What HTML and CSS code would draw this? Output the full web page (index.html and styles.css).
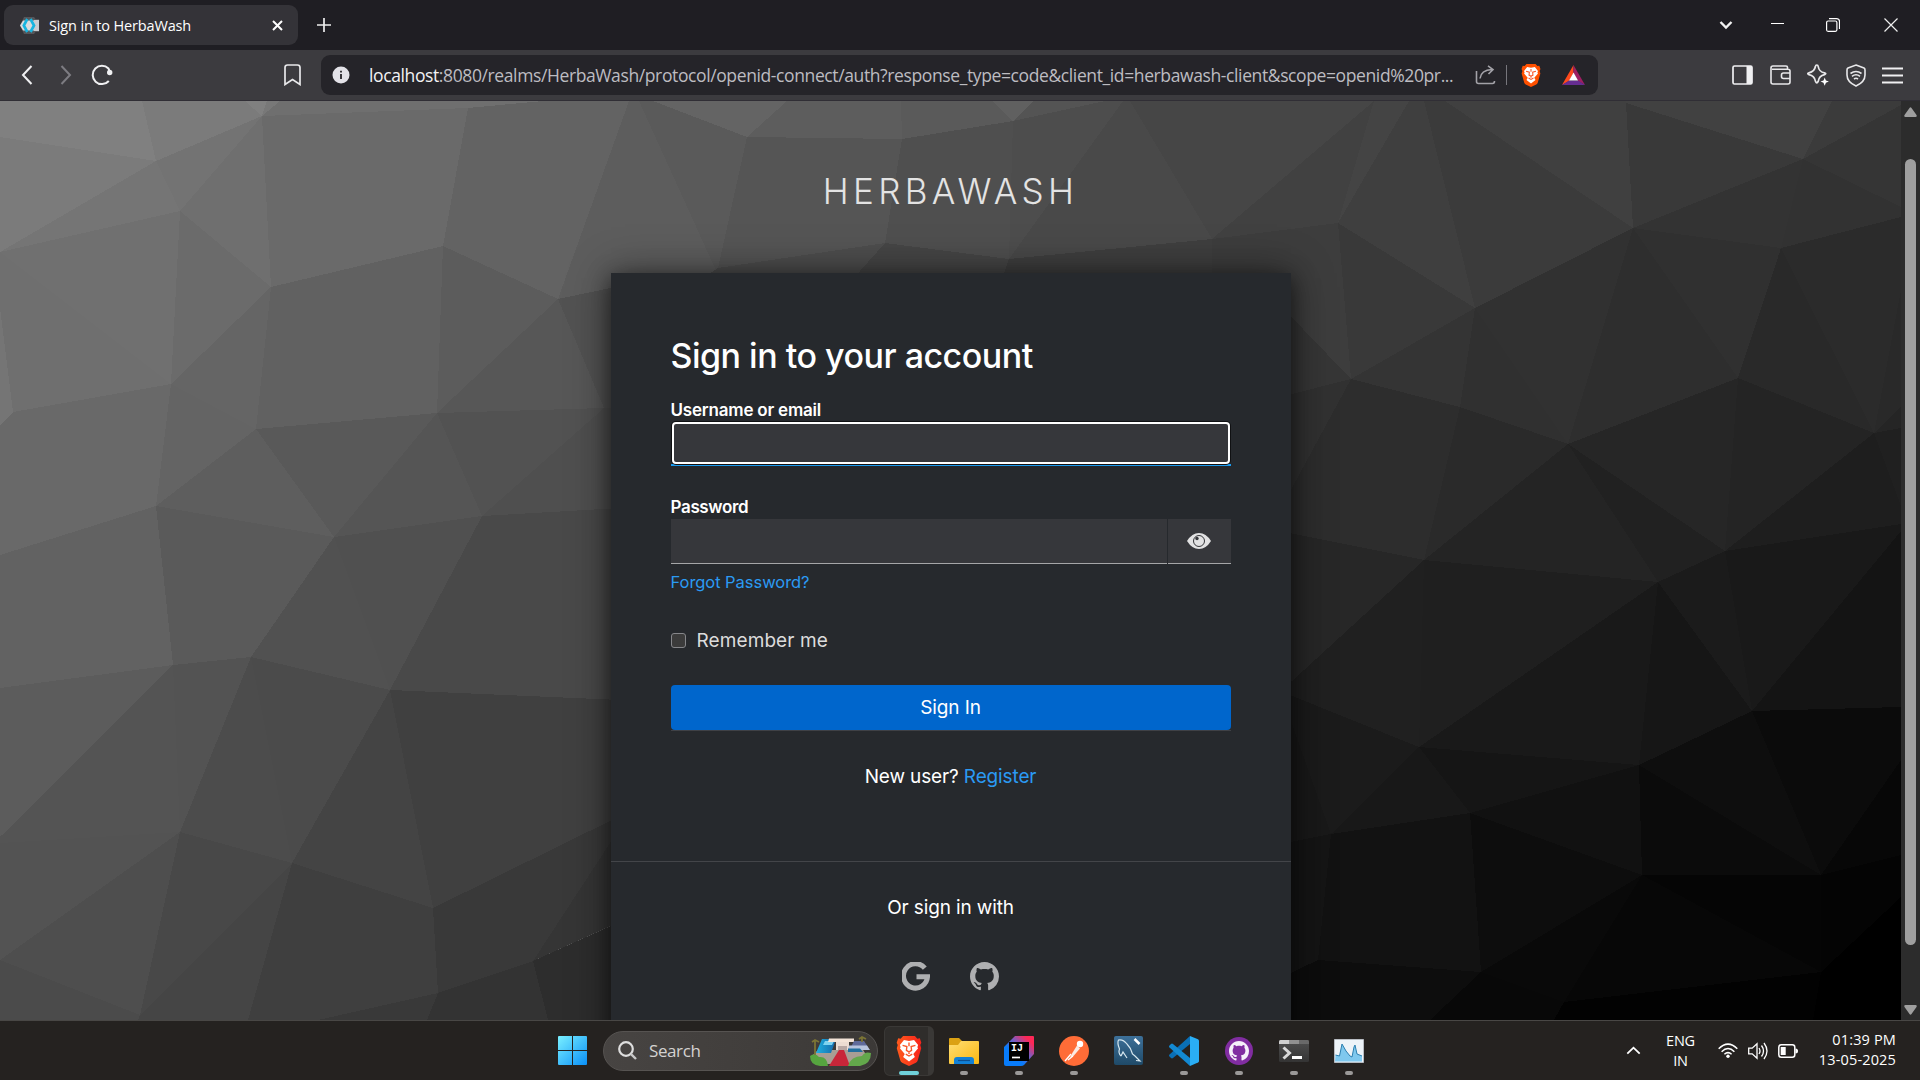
FILE: index.html
```html
<!DOCTYPE html>
<html lang="en">
<head>
<meta charset="utf-8">
<title>Sign in to HerbaWash</title>
<link rel="stylesheet" href="styles.css">
</head>
<body>
<svg width="0" height="0" class="defs">
  <defs>
    <linearGradient id="gWin" x1="0" y1="0" x2="1" y2="1"><stop offset="0" stop-color="#7af0ff"/><stop offset="1" stop-color="#0a90f8"/></linearGradient>
    <linearGradient id="gBrave" x1="0" y1="0" x2="1" y2="0"><stop offset="0" stop-color="#ff5a1c"/><stop offset="1" stop-color="#f8231c"/></linearGradient>
    <linearGradient id="gFolder" x1="0" y1="0" x2="1" y2="1"><stop offset="0" stop-color="#ffde74"/><stop offset="1" stop-color="#f9b710"/></linearGradient>
    <linearGradient id="gIj" x1="0" y1="1" x2="1" y2="0"><stop offset=".35" stop-color="#087cfa"/><stop offset=".6" stop-color="#7b5bc0"/><stop offset=".85" stop-color="#fe2857"/></linearGradient>
    <linearGradient id="gSql" x1="0" y1="0" x2="0" y2="1"><stop offset="0" stop-color="#3d7099"/><stop offset="1" stop-color="#1f4a68"/></linearGradient>
    <linearGradient id="gTerm" x1="0" y1="0" x2="0" y2="1"><stop offset="0" stop-color="#505050"/><stop offset="1" stop-color="#343434"/></linearGradient>
    <linearGradient id="gPool" x1="0" y1="0" x2="1" y2="0"><stop offset="0" stop-color="#20b0e0"/><stop offset="1" stop-color="#1667a8"/></linearGradient>
    <symbol id="lion" viewBox="0 0 24 28">
      <path d="M6.500 0h11l2.300 2.500 2.300-.3 1.400 4-1 2.300.9 3-3.200 11.200q-.5 1.500-1.800 2.300L12 28l-6.400-3q-1.300-.8-1.800-2.300L.6 11.500l.9-3-1-2.300 1.400-4 2.300.3z"/>
      <path fill="#fff" d="M12 4.600l4.700-.9 3.800 4.700-.7 2.100.7 1-4.500 5.200 1.500 2.800L12 23.700l-5.500-4.200L8 16.700l-4.500-5.200.7-1-.7-2.100 3.800-4.700z"/>
      <path class="lion-face" d="M6 8.800l4 1.100-.4 3.600 2.400 1.300 2.400-1.300-.4-3.600 4-1.100M12 6v3.500M9 17l3 1.700 3-1.700M12 14.800v2" fill="none" stroke-width="1.300"/>
    </symbol>
    <symbol id="octocat" viewBox="0 0 16 16">
      <path d="M8 0C3.580 0 0 3.580 0 8c0 3.540 2.290 6.530 5.470 7.590.4.070.55-.17.550-.38 0-.19-.01-.82-.01-1.490-2.010.37-2.530-.49-2.690-.94-.09-.23-.48-.94-.82-1.130-.28-.15-.68-.52-.01-.53.630-.01 1.080.58 1.230.82.720 1.210 1.870.87 2.330.66.070-.52.280-.87.510-1.070-1.780-.2-3.640-.89-3.640-3.950 0-.87.310-1.590.82-2.150-.08-.2-.36-1.020.08-2.120 0 0 .67-.21 2.200.82.640-.18 1.320-.27 2-.27s1.360.09 2 .27c1.530-1.040 2.200-.82 2.200-.82.440 1.100.16 1.920.08 2.120.51.560.82 1.270.82 2.150 0 3.070-1.870 3.750-3.650 3.950.29.250.54.730.54 1.480 0 1.070-.01 1.930-.01 2.200 0 .21.150.46.550.38A8.010 8.010 0 0 0 16 8c0-4.420-3.580-8-8-8z"/>
    </symbol>
  </defs>
</svg>

<header class="titlebar">
  <div class="tab">
    <svg class="favicon" width="21" height="19" viewBox="0 0 21 19"><path d="M5 1h10l1.500 2H20v13h-3.500L15 18H5L1 9.500z" fill="#55565a"/><path d="M15 4h5v11h-5z" fill="#c9cbd0"/><path d="M4 4.500h11v10H4L1 9.500z" fill="#dadcdf"/><path d="M8.300 3L4.800 9.500 8.300 16M11.500 3L15 9.500 11.500 16" fill="none" stroke="#18b4e0" stroke-width="2.700"/></svg>
    <span class="tab-title">Sign in to HerbaWash</span>
    <svg class="tab-close" width="11" height="11" viewBox="0 0 11 11"><path d="M1 1l9 9M10 1l-9 9" stroke="#fff" stroke-width="2"/></svg>
  </div>
  <svg class="new-tab" width="14" height="14" viewBox="0 0 14 14"><path d="M7 0v14M0 7h14" stroke="#eee" stroke-width="1.700"/></svg>
  <div class="window-buttons">
    <svg width="14" height="10" viewBox="0 0 14 10"><path d="M1.500 2L7 7.500 12.500 2" fill="none" stroke="#f2f2f2" stroke-width="2.400"/></svg>
    <svg class="win-min" width="13" height="14" viewBox="0 0 13 14"><path d="M0 5.500h13" stroke="#fff" stroke-width="1"/></svg>
    <svg class="win-max" width="14" height="14" viewBox="0 0 14 14"><path d="M.6 4.500q0-1.500 1.500-1.500h7.300q1.500 0 1.500 1.500v7.300q0 1.500-1.500 1.500H2.100q-1.500 0-1.500-1.500zM3 .6h7.500q3 0 3 3V11" fill="none" stroke="#fff" stroke-width="1.200"/></svg>
    <svg class="win-close" width="14" height="14" viewBox="0 0 14 14"><path d="M.5.5l13 13M13.500.5l-13 13" stroke="#eee" stroke-width="1.200"/></svg>
  </div>
</header>

<nav class="toolbar">
  <svg class="back" width="12" height="20" viewBox="0 0 12 20"><path d="M10.500 1L2 10l8.500 9" fill="none" stroke="#f0f0f2" stroke-width="2"/></svg>
  <svg class="forward" width="12" height="20" viewBox="0 0 12 20"><path d="M1.500 1L10 10l-8.500 9" fill="none" stroke="#7d7c82" stroke-width="2"/></svg>
  <svg class="reload" width="22" height="22" viewBox="0 0 22 22"><path d="M17.800 17A9.200 9.200 0 1 1 17.500 4.500L19 8" fill="none" stroke="#f0f0f2" stroke-width="2"/><circle cx="18.700" cy="8.500" r="2.700" fill="#f0f0f2"/></svg>
  <svg class="bookmark" width="17" height="22" viewBox="0 0 17 22"><path d="M1 3.500Q1 1 3.500 1h10Q16 1 16 3.500V20.500l-7.500-5-7.500 5z" fill="none" stroke="#e8e8ea" stroke-width="1.700"/></svg>
  <div class="address">
    <svg class="info" width="18" height="18" viewBox="0 0 18 18"><circle cx="9" cy="9" r="8.500" fill="#e3e2e8"/><path d="M9 8v5M9 4.700v1.800" stroke="#252429" stroke-width="1.800"/></svg>
    <span class="url"><b>localhost</b>:8080/realms/HerbaWash/protocol/openid-connect/auth?response_type=code&amp;client_id=herbawash-client&amp;scope=openid%20pr...</span>
    <svg class="share" width="21" height="20" viewBox="0 0 21 20"><path d="M1.500 6v10.500q0 2 2 2h14q2 0 2-2.500M5 13.500Q6 5 17 4.500M13 .8l5 3.700-4.500 4.500" fill="none" stroke="#a3a2a8" stroke-width="1.600"/></svg>
    <i class="sep"></i>
    <svg class="lion-small" width="20" height="23"><use href="#lion" width="20" height="23" fill="#ff5000"/></svg>
    <svg class="bat" width="23" height="20" viewBox="0 0 23 20"><path d="M11.500 0L0 20l7-4 4.500-8z" fill="#ff4a1c"/><path d="M11.500 0L23 20l-7-4-4.500-8z" fill="#9e1f63"/><path d="M0 20h23l-7-4.500H7z" fill="#662d91"/><path d="M11.500 7.500L16 15.500H7z" fill="#fff"/></svg>
  </div>
  <div class="actions">
    <svg width="21" height="20" viewBox="0 0 21 20"><rect x="1" y="1" width="19" height="18" rx="1.500" fill="none" stroke="#f0f0f2" stroke-width="1.700"/><path d="M14.500 1H20v18h-5.500z" fill="#f0f0f2"/></svg>
    <svg width="21" height="20" viewBox="0 0 21 20"><path d="M17.500 4V2.200Q17.500 1 16 1H3Q1 1 1 3v14q0 2 2 2h15q2 0 2-2V6q0-1.800-2-1.800H2M20 8h-6.500q-2 0-2 2v1.500q0 2 2 2H20z" fill="none" stroke="#e8e8ea" stroke-width="1.600"/></svg>
    <svg width="22" height="22" viewBox="0 0 22 22"><path d="M9.800 1Q11 1 11.200 2.500 12 7.800 17.500 8.800q2.500.7 0 1.800-5.500 1.300-6.300 6.700-1.400 3-2.700 0-1-5.500-6.500-6.700-2.500-1 0-1.800Q7.500 7.600 8.400 2.500 8.600 1 9.800 1z" fill="none" stroke="#e8e8ea" stroke-width="1.700"/><path d="M17.700 13.500l1.200 3 3 1.100-3 1.200-1.200 3-1.200-3-3-1.200 3-1.100z" fill="#fff"/></svg>
    <svg width="20" height="23" viewBox="0 0 20 23"><path d="M10 1l8 3q1 .5 1 2v5q0 7-9 11-9-4-9-11V6q0-1.500 1-2z" fill="none" stroke="#e8e8ea" stroke-width="1.600"/><path d="M4.500 9.500q5.500-4 11 0M6 12.300q4-3 8 0M8 15q2-1.500 4 0" fill="none" stroke="#e8e8ea" stroke-width="1.600"/></svg>
    <svg width="21" height="17" viewBox="0 0 21 17"><path d="M0 1.500h21M0 8.500h21M0 15.500h21" stroke="#f0f0f2" stroke-width="1.800"/></svg>
  </div>
</nav>

<div class="viewport">
  <main class="page">
    <svg class="facets" viewBox="0 101 1901 919" preserveAspectRatio="none">
      <g>
        <path fill="#808080" d="M0 101H142L156 161 0 137z"/><path fill="#7b7b7b" d="M142 101H245L262 116 156 161z"/><path fill="#808080" d="M245 101h22l-5 15z"/><path fill="#787878" d="M267 101h13l-18 15z"/><path fill="#6f6f6f" d="M280 101H543L468 108 262 116z"/>
        <path fill="#7b7b7b" d="M0 137L156 161 0 252z"/><path fill="#757575" d="M0 252L156 161 180 211z"/><path fill="#737373" d="M156 161L262 116 180 211z"/><path fill="#6f6f6f" d="M262 116L271 287 180 211z"/><path fill="#6a6a6a" d="M262 116L468 108 443 246 271 287z"/><path fill="#636363" d="M468 108L543 101H629L558 299 443 246z"/>
        <path fill="#707070" d="M0 252L180 211 171 384z"/><path fill="#6f6f6f" d="M0 252L171 384 13 412 0 310z"/><path fill="#757575" d="M0 308L13 412 0 425z"/><path fill="#6b6b6b" d="M180 211L271 287 171 384z"/><path fill="#616161" d="M271 287L443 246 437 413 256 429z"/><path fill="#5c5c5c" d="M443 246L558 299 437 413z"/>
        <path fill="#656565" d="M171 384L271 287 256 429z"/><path fill="#696969" d="M13 412L171 384 156 506 0 555V425z"/><path fill="#646464" d="M171 384L256 429 156 506z"/><path fill="#575757" d="M558 299L604 408 437 413z"/><path fill="#525252" d="M558 299L620 286V408H604z"/>
        <path fill="#5e5e5e" d="M256 429L334 537 156 506z"/><path fill="#595959" d="M256 429L437 413 334 537z"/><path fill="#555" d="M437 413L482 516 334 537z"/><path fill="#525252" d="M437 413L604 408 482 516z"/><path fill="#4f4f4f" d="M604 408H620V509H604L482 516z"/>
        <path fill="#626262" d="M0 555L156 506 173 665 0 688z"/><path fill="#5a5a5a" d="M156 506L334 537 251 657 173 665z"/><path fill="#515151" d="M334 537L390 690 251 657z"/><path fill="#505050" d="M334 537L482 516 390 690z"/><path fill="#494949" d="M482 516L620 508V700L390 690z"/>
        <path fill="#5c5c5c" d="M0 688L173 665 0 837z"/><path fill="#545454" d="M0 837L173 665 180 832 0 843z"/><path fill="#535353" d="M173 665L251 657 180 832z"/><path fill="#4c4c4c" d="M251 657L292 863 180 832z"/><path fill="#4b4b4b" d="M251 657L390 690 292 863z"/><path fill="#444" d="M390 690L433 908 292 863z"/><path fill="#404040" d="M390 690L620 700V816L433 908z"/>
        <path fill="#535353" d="M0 843L180 832 0 960z"/><path fill="#4e4e4e" d="M0 960L180 832 140 1015z"/><path fill="#484848" d="M180 832L292 863 140 1015z"/><path fill="#454545" d="M140 1015L292 863 248 1020H138z"/><path fill="#3f3f3f" d="M292 863L433 908 438 993 318 1020H248z"/><path fill="#393939" d="M433 908L620 816V847L533 961 438 993z"/><path fill="#353535" d="M533 961L612 840V925z"/><path fill="#4b4b4b" d="M0 960L140 1015 138 1020H0z"/><path fill="#393939" d="M438 993L427 1020H318z"/><path fill="#333" d="M438 993L533 961 548 1020H427z"/><path fill="#2d2d2d" d="M533 961L620 922V1020H548z"/>
      </g>
      <g>
        <path fill="#5d5d5d" d="M629 101H639L718 275 620 286 558 299z"/><path fill="#5a5a5a" d="M639 101H653L747 137 718 275z"/><path fill="#646464" d="M653 101H787L747 137z"/><path fill="#5d5d5d" d="M787 101H901L902 139 747 137z"/><path fill="#5a5a5a" d="M901 101H992L1013 121 902 139z"/><path fill="#606060" d="M992 101h41l-20 20z"/><path fill="#545454" d="M1033 101H1105L1013 121z"/>
        <path fill="#555" d="M747 137L902 139 885 243 718 268z"/><path fill="#4f4f4f" d="M902 139L1013 121 1009 259 885 243z"/><path fill="#4d4d4d" d="M1013 121L1105 101H1123L1009 259z"/><path fill="#494949" d="M1123 101H1130L1212 239 1009 259z"/><path fill="#464646" d="M1130 101H1374L1212 239z"/>
        <path fill="#4e4e4e" d="M718 268L885 243 852 280H700z"/><path fill="#464646" d="M885 243L1009 259 1002 280H852z"/><path fill="#3f3f3f" d="M1009 259L1212 239V280H1002z"/>
      </g>
      <g>
        <path fill="#414141" d="M1374 101L1338 223 1212 239z"/><path fill="#444" d="M1374 101H1409L1338 223z"/><path fill="#3d3d3d" d="M1212 239L1338 223 1351 379 1280 305 1212 290z"/><path fill="#3f3f3f" d="M1409 101H1424L1475 308 1338 223z"/><path fill="#3b3b3b" d="M1424 101H1445L1633 228 1475 308z"/><path fill="#404040" d="M1445 101H1626L1633 228z"/><path fill="#414141" d="M1626 101H1832L1803 159 1626 103z"/><path fill="#393939" d="M1626 103L1803 159 1633 228z"/><path fill="#3b3b3b" d="M1832 101H1901V105L1803 159z"/><path fill="#353535" d="M1901 105V207L1803 159z"/>
        <path fill="#333" d="M1633 228L1803 159 1781 248z"/><path fill="#323232" d="M1803 159L1901 207V217L1781 248z"/><path fill="#393939" d="M1338 223L1475 308 1351 379z"/><path fill="#343434" d="M1475 308L1460 407 1351 379z"/><path fill="#303030" d="M1475 308L1568 444 1460 407z"/><path fill="#313131" d="M1475 308L1633 228 1568 444z"/><path fill="#2e2e2e" d="M1633 228L1738 378 1568 444z"/><path fill="#303030" d="M1633 228L1781 248 1738 378z"/><path fill="#292929" d="M1781 248L1874 433 1738 378z"/><path fill="#2b2b2b" d="M1781 248L1901 217V290L1874 433z"/><path fill="#292929" d="M1901 290V407L1874 433z"/>
        <path fill="#363636" d="M1280 305L1351 379 1280 397z"/><path fill="#313131" d="M1280 397L1351 379 1291 491 1280 510z"/><path fill="#2d2d2d" d="M1351 379L1460 407 1424 560 1280 531V510z"/><path fill="#2a2a2a" d="M1460 407L1568 444 1424 560z"/><path fill="#242424" d="M1568 444L1658 582 1424 560z"/><path fill="#212121" d="M1568 444L1725 551 1658 582z"/><path fill="#262626" d="M1568 444L1738 378 1725 551z"/><path fill="#242424" d="M1738 378L1874 433 1725 551z"/><path fill="#1e1e1e" d="M1874 433L1901 506V524L1725 551z"/><path fill="#202020" d="M1874 433L1901 428V506z"/><path fill="#252525" d="M1874 433L1901 407V428z"/>
        <path fill="#272727" d="M1280 531L1424 560 1280 692z"/><path fill="#202020" d="M1280 692L1424 560 1419 747 1280 691z"/><path fill="#1f1f1f" d="M1424 560L1658 582 1419 747z"/><path fill="#191919" d="M1658 582L1639 765 1419 747z"/><path fill="#161616" d="M1658 582L1752 711 1639 765z"/><path fill="#1b1b1b" d="M1658 582L1725 551 1752 711z"/><path fill="#191919" d="M1725 551L1901 524V531L1752 711z"/><path fill="#141414" d="M1901 531V707L1752 711z"/>
        <path fill="#1b1b1b" d="M1280 691L1419 747 1331 834 1280 690z"/><path fill="#191919" d="M1280 690L1331 834 1280 844z"/><path fill="#181818" d="M1419 747L1470 813 1331 834z"/><path fill="#151515" d="M1419 747L1639 765 1470 813z"/><path fill="#111" d="M1639 765L1642 875 1470 813z"/><path fill="#0b0b0b" d="M1639 765L1821 875H1642z"/><path fill="#0e0e0e" d="M1639 765L1752 711 1821 875z"/><path fill="#0b0b0b" d="M1752 711L1901 707V760L1821 875z"/><path fill="#070707" d="M1901 760V855L1821 875z"/>
        <path fill="#151515" d="M1280 844L1331 834 1318 960 1280 978z"/><path fill="#121212" d="M1331 834L1470 813 1481 972 1318 960z"/><path fill="#0d0d0d" d="M1470 813L1642 875 1481 972z"/><path fill="#090909" d="M1642 875L1564 1002 1481 972z"/><path fill="#070707" d="M1642 875L1821 972 1564 1002z"/><path fill="#050505" d="M1642 875H1821V972z"/><path fill="#040404" d="M1821 875L1901 855V897L1821 972z"/><path fill="#000" d="M1901 897V1020H1813L1821 972z"/>
        <path fill="#0d0d0d" d="M1280 978L1318 960 1481 972 1430 1020H1280z"/><path fill="#080808" d="M1481 972L1564 1002 1554 1020H1430z"/><path fill="#020202" d="M1564 1002L1821 972 1813 1020H1554z"/>
      </g>
    </svg>
    <div class="login">
      <h2 class="realm">HERBAWASH</h2>
      <section class="card">
        <form class="form">
          <h1>Sign in to your account</h1>
          <label class="label user-label">Username or email</label>
          <div class="user-field"><div class="input focused"></div></div>
          <label class="label pass-label">Password</label>
          <div class="password"><div class="input"></div><div class="eye"><svg width="24" height="16" viewBox="0 0 24 16"><path d="M0 8Q5 0 12 0t12 8q-5 8-12 8T0 8z" fill="#e2e2e3"/><circle cx="12" cy="8" r="5.500" fill="none" stroke="#36373b" stroke-width="1"/><circle cx="10" cy="5.500" r="1.700" fill="#36373b"/></svg></div></div>
          <a class="forgot">Forgot Password?</a>
          <div class="remember"><i class="checkbox"></i><span>Remember me</span></div>
          <div class="button-wrap"><div class="button"><span>Sign In</span></div></div>
          <p class="register"><span>New user? <a>Register</a></span></p>
        </form>
        <div class="social">
          <p><span>Or sign in with</span></p>
          <div class="providers">
            <svg width="28" height="29" viewBox="0 0 28 29"><path d="M22.800 6.100A12 12.200 0 1 0 25.500 14.800H14.500" fill="none" stroke="#aeafb1" stroke-width="5"/></svg>
            <svg width="29" height="29"><use href="#octocat" width="29" height="29" fill="#aeafb1"/></svg>
          </div>
        </div>
      </section>
    </div>
  </main>
  <aside class="scrollbar">
    <svg width="13" height="10" viewBox="0 0 13 10"><path d="M5.500 1q1-1.500 2 0l5 7q.8 2-1 2h-10q-1.800 0-1-2z" fill="#9f9f9f"/></svg>
    <i class="thumb"></i>
    <svg class="down" width="13" height="10" viewBox="0 0 13 10"><path d="M5.500 9q1 1.500 2 0l5-7q.8-2-1-2h-10Q-.3 0 .5 2z" fill="#9f9f9f"/></svg>
  </aside>
</div>

<footer class="taskbar">
  <svg class="start" width="29" height="29" viewBox="0 0 29 29"><path d="M1 0h13v14H0V1q0-1 1-1zM15 0h13q1 0 1 1v13H15zM0 15h14v14H1q-1 0-1-1zM15 15h14v13q0 1-1 1H15z" fill="url(#gWin)"/></svg>
  <div class="search">
    <svg width="19" height="19" viewBox="0 0 19 19"><circle cx="8" cy="8" r="6.800" fill="none" stroke="#dedede" stroke-width="2.200"/><path d="M12.800 12.800L18 18" stroke="#c8c8c8" stroke-width="2.400"/></svg>
    <span>Search</span>
    <svg class="art" width="61" height="31" viewBox="0 0 61 31">
      <path d="M3 20L8 15h45l6 9-12 5H12z" fill="#a89e94"/>
      <path d="M12 4h14l-5 14H6z" fill="url(#gPool)"/><path d="M15 6h9l-2 4h-9z" fill="#7fd4f0"/>
      <path d="M19 3.500h25V7H18z" fill="#f3e3d7"/><path d="M26 7h13v8H26z" fill="#ecdcd2"/><path d="M28 11h9v4h-9z" fill="#b9a8a4"/>
      <path d="M44 6h10l4 6H41z" fill="#5f6a9a"/><path d="M39 10.500h18l3 4.500H38z" fill="#b7c3dd"/><path d="M38 13.500h12l3 3.500H38z" fill="#226f9e"/>
      <path d="M29 15h5l6 16H19z" fill="#c82639"/><path d="M0 21q5-4 9 1 8-1 9 9H10Q0 30 0 21z" fill="#56a43f"/><path d="M61 18q-6-2-9 3-11 0-14 10h12q11-2 11-13z" fill="#63a84b"/>
      <path d="M5 20V5M2 7l3-2 4 2M52 7V2M49 4l3-2 4 2" fill="none" stroke="#7b7435" stroke-width="1.800"/>
    </svg>
  </div>
  <div class="apps">
    <div class="app active"><svg class="brave" width="26" height="30"><use href="#lion" width="26" height="30" fill="url(#gBrave)"/></svg></div>
    <div class="app"><svg width="30" height="30" viewBox="0 0 30 30"><path d="M0 3q0-1 1-1h9l3 3v5H0z" fill="#dba113"/><path d="M0 9h9l3-4h17q1 0 1 1v21q0 1-1 1H1q-1 0-1-1z" fill="url(#gFolder)"/><path d="M5 28v-4q0-3 3-3h14q3 0 3 3v4z" fill="#1180d6"/><path d="M9 24.500h12" stroke="#0c4f91" stroke-width="1.200"/></svg></div>
    <div class="app"><svg width="30" height="30" viewBox="0 0 30 30"><path d="M0 11L11 0h18q1 0 1 1v17L20 29q-1 1-3 1H2q-2 0-2-2z" fill="url(#gIj)"/><path d="M5 6h20v19H5z" fill="#000"/><path d="M8 21.500h8" stroke="#fff" stroke-width="1.700"/><text x="7" y="14.500" class="ij">IJ</text></svg></div>
    <div class="app"><svg width="30" height="30" viewBox="0 0 30 30"><circle cx="15" cy="15" r="15" fill="#ff6c37"/><circle cx="21" cy="8" r="3.200" fill="#fff"/><path d="M18 9.500l3 3-6.500 7.500-3.500 1.500 2-4z" fill="#fbe9e2"/><path d="M12 18l-6 7M14 20l-5 4" stroke="#fff" stroke-width="1.300"/></svg></div>
    <div class="app idle"><svg width="29" height="29" viewBox="0 0 29 29"><rect width="29" height="29" rx="2" fill="url(#gSql)"/><path d="M7 20Q4 17 5.500 13 3 7 4.500 4 9 3 13 8q4 4 5.500 10l2.500 2 5 5-4-.5M7 20l2-4 4 6" fill="none" stroke="#d6e7ef" stroke-width="1.200"/><path d="M20.500 3l5 5" stroke="#fff" stroke-width="2.500"/></svg></div>
    <div class="app"><svg width="30" height="30" viewBox="0 0 30 30"><path d="M21 0l8 3.300Q30 4 30 5v20q0 1-1 1.600L21 30z" fill="#2aaef5"/><path d="M21 0v8L4 22q-1 .8-2 0l-1.500-1.500q-1-1 0-2z" fill="#0a6fb6"/><path d="M21 30v-8L4 8q-1-.8-2 0L.5 9.500q-1 1 0 2z" fill="#1389d2"/></svg></div>
    <div class="app"><svg width="28" height="28" viewBox="0 0 28 28"><circle cx="14" cy="14" r="14" fill="#812da1"/><use href="#octocat" x="4" y="4" width="20" height="20" fill="#f5effa"/></svg></div>
    <div class="app"><svg width="30" height="22" viewBox="0 0 30 22"><rect width="30" height="22" rx="1.500" fill="url(#gTerm)"/><path d="M0 4V1.500Q0 0 1.500 0H10v4z" fill="#cfcfcf"/><path d="M10 0h10v4H10z" fill="#919191"/><path d="M20 0h8.500Q30 0 30 1.500V4H20z" fill="#696969"/><path d="M4.500 7.500l6 5.500-6 5.500" fill="none" stroke="#d8d8d8" stroke-width="3"/><path d="M13 17.500h10" stroke="#fff" stroke-width="3"/></svg></div>
    <div class="app"><svg width="30" height="24" viewBox="0 0 30 24"><path d="M.5.500h29v23H.5z" fill="#edf3f8" stroke="#b8bcc2"/><path d="M1.500 16l4 1L8 5l4 7 4 5 2 1 2-10 1-2 2 9 5 2v5.500h-27z" fill="#7fc8ee"/><path d="M1.500 16l4 1L8 5l4 7 4 5 2 1 2-10 1-2 2 9 5 2" fill="none" stroke="#2b7fb0" stroke-width="1"/></svg></div>
  </div>
  <div class="tray">
    <svg class="up" width="15" height="9" viewBox="0 0 15 9"><path d="M1.300 7.700l6.200-6 6.200 6" fill="none" stroke="#fff" stroke-width="1.800"/></svg>
    <div class="lang">ENG<br>IN</div>
    <svg class="wifi" width="20" height="15" viewBox="0 0 20 15"><path d="M.7 5.800q9.300-9.300 18.600 0M3.600 8.700q6.400-6.300 12.800 0M6.400 11.300q3.600-3.300 7.200 0" fill="none" stroke="#fff" stroke-width="1.500"/><circle cx="10" cy="13.200" r="1.700" fill="#fff"/></svg>
    <svg class="sound" width="20" height="18" viewBox="0 0 20 18"><path d="M.7 6.200h3.500L9 1.800v14.400L4.200 11.800H.7z" fill="none" stroke="#fff" stroke-width="1.300"/><path d="M11 6q2 3 0 6M13.500 3.500q4 5.500 0 11M16 1q6 8 0 16" fill="none" stroke="#fff" stroke-width="1.300"/></svg>
    <svg class="battery" width="20" height="14" viewBox="0 0 20 14"><rect x=".8" y=".8" width="16" height="12.400" rx="2.500" fill="none" stroke="#fff" stroke-width="1.500"/><rect x="2.700" y="3" width="5" height="8" fill="#fff"/><path d="M17.500 4.500q2.500 0 2.500 2.500t-2.500 2.500z" fill="#fff"/></svg>
    <div class="clock">01:39 PM<br>13-05-2025</div>
  </div>
</footer>
</body>
</html>
```
FILE: styles.css
```css
* { box-sizing: border-box; }
body { margin: 0; width: 1920px; height: 1080px; overflow: hidden; display: flex; flex-direction: column; background: #1f1e23; font-family: "Open Sans", "Noto Sans", sans-serif; color: #fff; }
svg { display: block; flex: none; }
i { display: block; flex: none; }
.defs { position: absolute; }
.lion-face { stroke: #f9572a; }

/* browser chrome */
.titlebar { height: 50px; flex: none; display: flex; align-items: center; padding-left: 4px; background: #1f1e23; }
.tab { width: 294px; height: 40px; border-radius: 9px; background: #343338; display: flex; align-items: center; padding: 0 15px; }
.tab-title { margin-left: 9px; font-size: 14.500px; letter-spacing: -.15px; white-space: nowrap; }
.tab-close { margin-left: auto; }
.new-tab { margin-left: 19px; }
.window-buttons { margin-left: auto; margin-right: 22px; display: flex; align-items: center; }
.win-min { margin-left: 38px; }
.win-max { margin-left: 42px; }
.win-close { margin-left: 44px; }
.toolbar { height: 51px; flex: none; display: flex; align-items: center; padding-left: 21px; background: #3c3b3f; border-bottom: 1px solid #302e35; }
.forward { margin-left: 27px; }
.reload { margin-left: 19px; }
.bookmark { margin-left: 171px; }
.address { margin-left: 20px; width: 1277px; height: 40px; border-radius: 9px; background: #252429; display: flex; align-items: center; padding-left: 11px; }
.url { margin-left: 19px; width: 1090px; font-size: 17.500px; letter-spacing: -.385px; line-height: 24px; color: #bdbcc1; white-space: nowrap; }
.url b { font-weight: 400; color: #f2f2f4; }
.share { margin-left: 16px; }
.sep { margin-left: 10px; width: 1px; height: 20px; background: #77767c; }
.lion-small { margin-left: 14px; }
.bat { margin-left: 21px; }
.actions { margin-left: auto; margin-right: 17px; display: flex; align-items: center; gap: 16.500px; }

/* sign-in page */
.viewport { height: 919px; flex: none; display: flex; }
.page { flex: 1; overflow: hidden; display: grid; font-family: Inter, "Open Sans", sans-serif; }
.facets { grid-area: 1 / 1; width: 1901px; height: 919px; background: linear-gradient(118deg, #808080, #484848 50%, #000); shape-rendering: crispEdges; }
.login { grid-area: 1 / 1; height: 919px; overflow: hidden; display: flex; flex-direction: column; align-items: center; position: relative; }
.realm { flex: none; margin: 68px 0 0; height: 104px; font-size: 35px; line-height: 44px; font-weight: 300; letter-spacing: 4.300px; color: #e3e3e3; white-space: nowrap; }
.card { width: 680px; height: 800px; flex: none; background: #26292d; box-shadow: 0 5px 20px rgba(0, 0, 0, .5), 0 0 40px rgba(0, 0, 0, .4); }
.form { height: 589px; padding: 62px 60px 0; display: flex; flex-direction: column; border-bottom: 1px solid #434549; }
.form h1 { margin: 0; height: 63px; font-size: 34px; line-height: 42px; font-weight: 500; letter-spacing: -.5px; white-space: nowrap; }
.label { height: 24px; font-size: 17px; line-height: 24px; font-weight: 600; letter-spacing: -.2px; }
.input { height: 45px; background: #36373b; border-bottom: 1px solid #a5a6a8; }
.user-field { height: 45px; margin-top: -1px; padding: 1px 1px 0; border-bottom: 2px solid #1c9cf0; }
.focused { height: 42px; border: 2px solid #fff; border-radius: 4px; box-shadow: 0 0 0 1px #101113; }
.pass-label { margin-top: 29px; letter-spacing: -.35px; }
.password { display: flex; gap: 1px; }
.password .input { width: 496px; }
.eye { flex: 1; height: 45px; background: #36373b; border-bottom: 1px solid #a5a6a8; display: flex; align-items: center; justify-content: center; }
.forgot { height: 36px; line-height: 36px; font-size: 16.500px; letter-spacing: -.05px; color: #2b9af3; }
.remember { margin-top: 26px; height: 28px; display: flex; align-items: center; font-size: 19px; letter-spacing: .1px; color: #dcdcdc; }
.checkbox { width: 15px; height: 15px; margin-right: 11px; border: 1px solid #85868a; border-radius: 3px; background: #3b3b3b; }
.button-wrap { margin-top: 31px; border-bottom: 1px solid #3f4146; }
.button { height: 45px; border-radius: 4px; background: #06c; text-align: center; font-size: 19px; line-height: 45px; letter-spacing: -.1px; }
.register { margin: 32px 0 0; text-align: center; font-size: 19px; line-height: 28px; letter-spacing: -.13px; }
.register a { color: #2b9af3; }
.social { padding-top: 32px; }
.social p { margin: 0; text-align: center; font-size: 19px; line-height: 28px; letter-spacing: -.13px; }
.providers { margin-top: 40px; display: flex; justify-content: center; gap: 40px; }
.scrollbar { width: 19px; background: #2c2c2c; display: flex; flex-direction: column; align-items: center; padding-top: 6px; }
.thumb { width: 11px; height: 786px; margin-top: 42px; border-radius: 6px; background: #9f9f9f; }
.down { margin-top: 60px; }

/* taskbar */
.taskbar { height: 60px; flex: none; display: flex; align-items: center; padding-left: 558px; background: #252220; border-top: 1px solid #494745; }
.search { margin-left: 16px; width: 275px; height: 40px; border-radius: 20px; background: linear-gradient(90deg, #474442, #3c3937); border: 1px solid #565351; display: flex; align-items: center; padding-left: 14px; }
.search span { margin-left: 12px; font-size: 17px; letter-spacing: -.4px; color: #d4d2d1; }
.art { margin-left: auto; margin-right: 6px; }
.apps { margin-left: 6px; display: flex; }
.app { position: relative; width: 55px; height: 50px; display: flex; align-items: center; justify-content: center; }
.app::after { content: ""; position: absolute; bottom: 1px; left: 24px; width: 8px; height: 4px; border-radius: 2px; background: #9b9998; }
.app.idle::after { display: none; }
.active { width: 50px; margin-right: 2px; border-radius: 6px; background: #2f2d2b; border: 1px solid #3a3836; border-right-width: 6px; justify-content: flex-start; padding-left: 11px; }
.active::after { left: 14px; bottom: 0; width: 20px; background: #6fd1da; }
.ij { font: 700 10px "Liberation Mono", monospace; fill: #fff; }
.tray { margin-left: auto; margin-right: 24px; height: 58px; display: flex; align-items: center; font-size: 14.500px; line-height: 20px; letter-spacing: -.2px; }
.lang { margin-left: 24px; width: 31px; text-align: center; }
.wifi { margin-left: 22px; }
.sound { margin-left: 10px; }
.battery { margin-left: 10px; }
.clock { margin-left: 19px; width: 79px; padding-bottom: 2px; letter-spacing: .15px; text-align: right; white-space: nowrap; }
```
